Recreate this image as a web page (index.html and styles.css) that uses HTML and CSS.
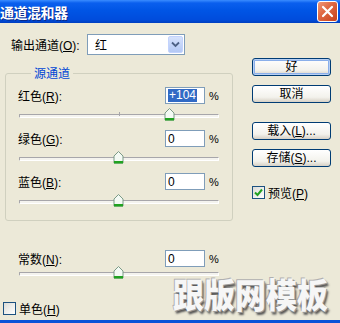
FILE: index.html
```html
<!DOCTYPE html>
<html lang="zh">
<head>
  <meta charset="UTF-8">
  <title>通道混和器</title>
  <link rel="stylesheet" href="styles.css">
</head>
<body>
  <div class="window">
    <!-- Titelleiste -->
    <div class="titlebar">
      <span class="title">通道混和器</span>
      <span class="close">
        <svg width="13" height="13" viewBox="0 0 13 13"><path d="M2 2 L11 11 M11 2 L2 11" stroke="#fff" stroke-width="2.2" stroke-linecap="round"/></svg>
      </span>
    </div>

    <div class="content">
      <div class="main">
        <div class="output-row">
          <label class="out-label">输出通道(<u>O</u>):</label>
          <div class="select">
            <span class="select-value">红</span>
            <span class="select-arrow">
              <svg width="9" height="7" viewBox="0 0 9 7"><path d="M1 1.5 L4.5 5 L8 1.5" fill="none" stroke="#4D6185" stroke-width="1.8"/></svg>
            </span>
          </div>
        </div>

        <fieldset class="group">
          <legend>源通道</legend>
          <div class="field">
            <div class="field-row">
              <label>红色(<u>R</u>):</label>
              <span class="num"><span class="selected">+104</span></span>
              <span class="pct">%</span>
            </div>
            <div class="slider">
              <div class="track"><i class="tick"></i><span class="thumb" style="left: 76%"></span></div>
            </div>
          </div>
          <div class="field">
            <div class="field-row">
              <label>绿色(<u>G</u>):</label>
              <span class="num">0</span>
              <span class="pct">%</span>
            </div>
            <div class="slider">
              <div class="track"><i class="tick"></i><span class="thumb" style="left: 50%"></span></div>
            </div>
          </div>
          <div class="field">
            <div class="field-row">
              <label>蓝色(<u>B</u>):</label>
              <span class="num">0</span>
              <span class="pct">%</span>
            </div>
            <div class="slider">
              <div class="track"><i class="tick"></i><span class="thumb" style="left: 50%"></span></div>
            </div>
          </div>
        </fieldset>

        <div class="field const">
          <div class="field-row">
            <label>常数(<u>N</u>):</label>
            <span class="num">0</span>
            <span class="pct">%</span>
          </div>
          <div class="slider">
            <div class="track"><i class="tick"></i><span class="thumb" style="left: 50%"></span></div>
          </div>
        </div>

        <div class="check-row mono">
          <span class="box"></span>
          <label>单色(<u>H</u>)</label>
        </div>
      </div>

      <!-- Buttons rechts -->
      <div class="side">
        <button class="btn default">好</button>
        <button class="btn">取消</button>
        <button class="btn load">载入(<u>L</u>)...</button>
        <button class="btn">存储(<u>S</u>)...</button>
        <div class="check-row preview">
          <span class="box">
            <svg width="9" height="9" viewBox="0 0 9 9"><path d="M1 4.5 L3.5 7 L8 1.5" fill="none" stroke="#21A121" stroke-width="2"/></svg>
          </span>
          <label>预览(<u>P</u>)</label>
        </div>
      </div>
    </div>

    <div class="bottom-edge"></div>
    <div class="watermark">跟版网模板</div>
  </div>
</body>
</html>
```

FILE: styles.css
```css
/* Grundstil */
* { margin: 0; padding: 0; box-sizing: border-box; }
body {
  background: #ECE9D8;
  font-family: "Liberation Sans", "Noto Sans CJK SC", sans-serif;
  font-size: 12px;
  color: #000;
}
u { text-decoration: underline; }

.window {
  position: relative;
  width: 340px;
  height: 323px;
  overflow: hidden;
  background: #ECE9D8;
}

/* Titelleiste */
.titlebar {
  height: 23px;
  display: flex;
  align-items: center;
  justify-content: space-between;
  background: linear-gradient(#3A8CFF 0, #0A5FEE 3px, #0055E5 45%, #004CDC 85%, #003FC0 100%);
}
.title {
  margin-left: 0;
  color: #fff;
  font-family: "Noto Sans CJK SC", sans-serif;
  font-weight: bold;
  font-size: 14px;
  letter-spacing: -0.5px;
  text-shadow: 1px 1px 0 #0A2A8A;
}
.close {
  width: 21px;
  height: 21px;
  margin-right: 2px;
  display: flex;
  align-items: center;
  justify-content: center;
  border: 1px solid #fff;
  border-radius: 3px;
  background: linear-gradient(135deg, #F09878 0%, #E06A44 40%, #C8411B 100%);
}

/* Inhalt */
.content { display: flex; }
.main { width: 240px; }

.output-row {
  display: flex;
  align-items: center;
  height: 21px;
  margin-top: 11px;
  padding-left: 11px;
}
.out-label { width: 76px; }
.select {
  width: 98px;
  height: 21px;
  display: flex;
  align-items: center;
  justify-content: space-between;
  background: #fff;
  border: 1px solid #7F9DB9;
}
.select-value { padding-left: 7px; }
.select-arrow {
  width: 15px;
  height: 17px;
  margin-right: 1px;
  display: flex;
  align-items: center;
  justify-content: center;
  border-radius: 2px;
  background: linear-gradient(#D6E2FC, #B3C8F5);
  border: 1px solid #C3D3FD;
}

/* Gruppe */
.group {
  margin: 11px 0 0 5px;
  width: 228px;
  border: 1px solid #D0D0BF;
  border-radius: 3px;
  padding: 7px 0 6px 12px;
}
.group legend {
  margin-left: 13px;
  padding: 0 3px;
  line-height: 14px;
  color: #0046D5;
  font-family: "Noto Sans CJK SC", sans-serif;
}

.field + .field { margin-top: 2px; }
.field-row {
  display: flex;
  align-items: center;
  height: 17px;
}
.field-row label { width: 147px; }
.num {
  width: 40px;
  height: 17px;
  padding-left: 2px;
  display: flex;
  align-items: center;
  background: #fff;
  border: 1px solid #7F9DB9;
  font-size: 12px;
}
.selected {
  background: #316AC5;
  color: #fff;
  padding: 0 1px;
  line-height: 13px;
}
.pct { margin-left: 4px; font-size: 11px; }

/* Schieberegler */
.slider {
  height: 24px;
  display: flex;
  align-items: center;
  padding-left: 1px;
}
.track {
  position: relative;
  width: 200px;
  height: 4px;
  background: #F4F3EE;
  border-top: 1px solid #A7A6AA;
  border-left: 1px solid #A7A6AA;
  border-bottom: 1px solid #fff;
  border-right: 1px solid #fff;
  border-radius: 1px;
}
.tick {
  position: absolute;
  left: 50%;
  top: -3px;
  width: 1px;
  height: 4px;
  background: #A7A6AA;
}
.thumb {
  position: absolute;
  top: -7px;
  width: 11px;
  height: 13px;
  margin-left: -6px;
  background: no-repeat center / 11px 13px;
  background-image: url("data:image/svg+xml,%3Csvg xmlns='http://www.w3.org/2000/svg' width='11' height='13'%3E%3Cpath d='M1 5 L5.5 0.5 L10 5 V12 H1 Z' fill='%23F4FAF4' stroke='%237A9A86' stroke-width='1'/%3E%3Crect x='1' y='10' width='9' height='2.5' fill='%2321A121'/%3E%3C/svg%3E");
}

/* Konstante */
.const { margin: 29px 0 0 18px; }
.const .slider { height: 14px; }

/* Checkboxen */
.check-row {
  display: flex;
  align-items: center;
  gap: 3px;
}
.mono { margin: 19px 0 0 3px; }
.box {
  width: 13px;
  height: 13px;
  display: flex;
  align-items: center;
  justify-content: center;
  border: 1px solid #1C5180;
  background: linear-gradient(135deg, #DCDCD7, #fff);
}

/* Rechte Spalte */
.side {
  margin: 35px 0 0 12px;
  width: 79px;
  display: flex;
  flex-direction: column;
}
.btn {
  height: 18px;
  width: 79px;
  border: 1px solid #003C74;
  border-radius: 3px;
  background: linear-gradient(#FFFFFF, #F3F2EC 70%, #D6D0C5);
  font-family: "Liberation Sans", "Noto Sans CJK SC", sans-serif;
  font-size: 12px;
  line-height: 15px;
  color: #000;
}
.btn.default { box-shadow: inset 0 0 0 1px #B8D0F4, inset 0 0 0 2px #8AAFEA; }
.btn + .btn { margin-top: 9px; }
.btn.load { margin-top: 19px; }
.preview { margin-top: 17px; }

/* Fensterrand unten */
.bottom-edge {
  position: absolute;
  left: 0;
  right: 0;
  bottom: 0;
  height: 3px;
  background: #0B52D8;
}

/* Wasserzeichen */
.watermark {
  position: absolute;
  left: 173px;
  top: 276px;
  font-family: "Noto Sans CJK SC", sans-serif;
  font-weight: 900;
  font-size: 31px;
  line-height: 36px;
  color: #F6F6F6;
  transform: scaleY(1.1);
  text-shadow: 1px 1px 0 #9A9A9A, 2px 2px 2px #555, -1px -1px 0 #B0B0B0;
}
```
